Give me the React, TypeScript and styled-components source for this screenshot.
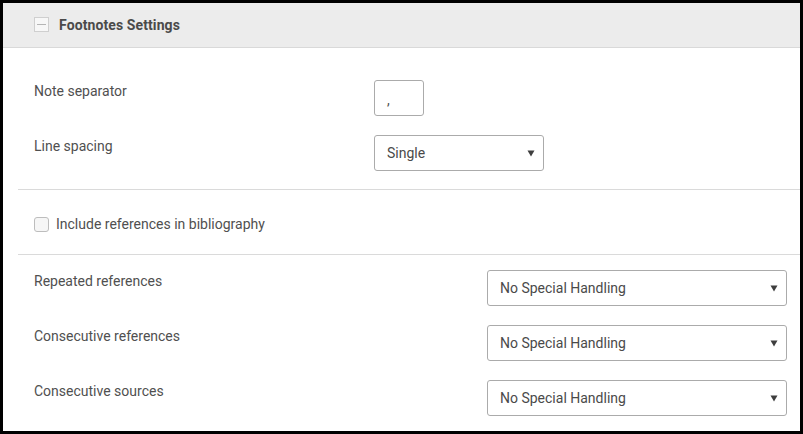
import React from "react";
import styled, { createGlobalStyle } from "styled-components";

const Global = createGlobalStyle`
  html, body { margin: 0; padding: 0; background: #fff; }
  body { font-family: Roboto, "Liberation Sans", Arial, sans-serif; }
  * { box-sizing: border-box; }
`;

const Frame = styled.div`
  width: 803px;
  height: 434px;
  border: 3px solid #000;
  background: #fff;
  overflow: hidden;
  display: flex;
  flex-direction: column;
`;

const Header = styled.div`
  height: 45px;
  flex: none;
  background: #ececec;
  border-bottom: 1px solid #d9d9d9;
  display: flex;
  align-items: center;
  padding-left: 31px;
  gap: 10px;
`;

const CollapseBox = styled.div`
  width: 15px;
  height: 15px;
  border: 1px solid #cfcfcf;
  background: #f7f7f7;
  display: flex;
  align-items: center;
  justify-content: center;
  margin-top: -2px;
  &::after {
    content: "";
    width: 9px;
    height: 1px;
    background: #b5b5b5;
  }
`;

const Title = styled.div`
  font-size: 14px;
  font-weight: 700;
  color: #4a4a4a;
  letter-spacing: 0.1px;
`;

const Section = styled.div<{ $top: number; $bottom: number; $gap?: number }>`
  margin-left: 15px;
  padding: ${(p) => p.$top}px 0 ${(p) => p.$bottom}px 16px;
  display: flex;
  flex-direction: column;
  gap: ${(p) => p.$gap ?? 0}px;
  & + & {
    border-top: 1px solid #dadada;
  }
`;

const Row = styled.div<{ $labelWidth: number }>`
  display: grid;
  grid-template-columns: ${(p) => p.$labelWidth}px auto;
  align-items: start;
  height: 36px;
`;

const Label = styled.div`
  font-size: 14px;
  color: #505050;
  line-height: 20px;
  margin-top: 1px;
`;

const TextBox = styled.div`
  width: 50px;
  height: 36px;
  border: 1px solid #ababab;
  border-radius: 3px;
  font-size: 14px;
  color: #505050;
  padding: 9px 0 0 12px;
  line-height: 20px;
`;

const SelectBox = styled.div<{ $width: number }>`
  width: ${(p) => p.$width}px;
  height: 36px;
  border: 1px solid #ababab;
  border-radius: 3px;
  background: #fff;
  display: flex;
  align-items: center;
  padding: 0 8px 0 12px;
  font-size: 14px;
  color: #4a4a4a;
  & > svg {
    margin-left: auto;
  }
`;

const CheckRow = styled.label`
  display: flex;
  align-items: center;
  gap: 7px;
  font-size: 14px;
  color: #505050;
  height: 20px;
`;

const CheckBox = styled.span`
  width: 15px;
  height: 15px;
  border: 1px solid #bdbdbd;
  border-radius: 3px;
  background: #f6f6f6;
  flex: none;
`;

const Arrow = () => (
  <svg width="8" height="7" viewBox="0 0 8 7">
    <path d="M0.5 0.5 L7.5 0.5 L4 6.5 Z" fill="#3e3e3e" />
  </svg>
);

const Select = ({ value, width }: { value: string; width: number }) => (
  <SelectBox $width={width}>
    <span>{value}</span>
    <Arrow />
  </SelectBox>
);

export default function App() {
  const handling = ["Repeated references", "Consecutive references", "Consecutive sources"];
  return (
    <>
      <Global />
      <Frame>
        <Header>
          <CollapseBox />
          <Title>Footnotes Settings</Title>
        </Header>
        <Section $top={32} $bottom={18} $gap={19}>
          <Row $labelWidth={340}>
            <Label>Note separator</Label>
            <TextBox>,</TextBox>
          </Row>
          <Row $labelWidth={340}>
            <Label>Line spacing</Label>
            <Select value="Single" width={170} />
          </Row>
        </Section>
        <Section $top={24} $bottom={20}>
          <CheckRow>
            <CheckBox />
            Include references in bibliography
          </CheckRow>
        </Section>
        <Section $top={15} $bottom={0} $gap={19}>
          {handling.map((h) => (
            <Row key={h} $labelWidth={453}>
              <Label>{h}</Label>
              <Select value="No Special Handling" width={300} />
            </Row>
          ))}
        </Section>
      </Frame>
    </>
  );
}
